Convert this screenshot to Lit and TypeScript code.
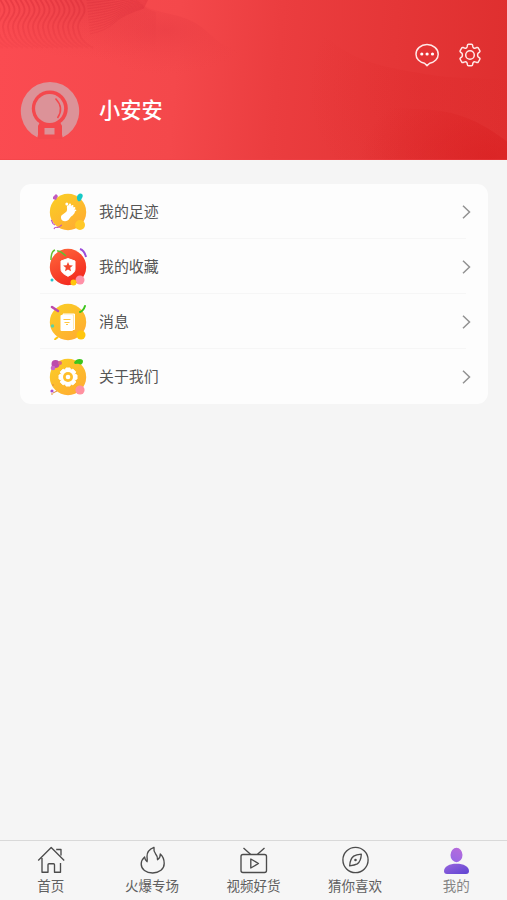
import { LitElement, html, svg, css } from "lit";
import { customElement, property } from "lit/decorators.js";
import { classMap } from "lit/directives/class-map.js";

const waveLines = Array.from({ length: 20 }, (_, i) => {
  const x = -14 + i * 5;
  return `M${x - 3} -4 C${x + 1} 3 ${x + 5} 7 ${x + 3} 13 S${x - 4} 21 ${x - 3} 28 S${x} 42 ${x + 12} 48`;
});
const fanLines = Array.from({ length: 14 }, (_, i) => {
  const d = i * 2.8;
  return `M${90 - d * 0.1} ${34 - d} Q${106 + d * 0.2} ${31 - d} ${114 + d * 0.3} ${23 - d * 0.8} T${144 + d * 0.2} ${8 - d * 0.4}`;
});

const art = {
  footprint: svg`
    <circle cx="19" cy="19" r="18.2" fill="url(#yellow)"/>
    <path d="M4 4l3-3 2 2-2 4-3-1z" fill="#c05cc0"/>
    <path d="M29 8c-2-3-1-7 2.500-7.500 3 .5 2.500 3 1.500 4.500s-1 4-4 3z" fill="#16c9c6"/>
    <path d="M2 27c2 1 0 4 4 5M5 36c1-3 3-1 5-2s2-2 3-2" fill="none" stroke="#bd54c8" stroke-width="1.2"/>
    <circle cx="31" cy="32" r="5" fill="#ffc928"/>
    <path d="M18.500 12.500c3-2 8 2 7.500 6-.5 3.500-4 4.500-5.500 7-2 4-8 3.500-8.500-.5-.5-3.500 3.500-4 5.500-6.500 1.500-2.500-.5-4.500 1-6z" fill="#fff"/>
    <g fill="#fff"><circle cx="17.800" cy="11" r="1.500"/><circle cx="21" cy="11.700" r="1.100"/><circle cx="23.500" cy="13" r="1"/><circle cx="25.400" cy="15" r="1"/><circle cx="26.400" cy="17.300" r=".9"/></g>`,
  favorite: svg`
    <circle cx="19" cy="19" r="18.2" fill="url(#red)"/>
    <path d="M2 12c0-5 1-9 4-10M8 3c4-1 6 3 9 5" fill="none" stroke="#65bd2e" stroke-width="1.500"/>
    <path d="M31 1c3 1 5 4 6 8" fill="none" stroke="#9c4cda" stroke-width="2"/>
    <circle cx="3" cy="32" r="1.500" fill="#21c3c9"/>
    <circle cx="31" cy="32" r="4.500" fill="#ff91a8"/><circle cx="24.500" cy="34.500" r="3" fill="#ffc60c"/>
    <path d="M19 10.500l7 2.500v8.300c0 3.500-4 5.500-7 7-3-1.500-7-3.500-7-7V13z" fill="#fff" stroke="#fff" stroke-linejoin="round"/>
    <path d="M19 14l1.400 3.200 3.500.3-2.700 2.300.8 3.400-3-1.800-3 1.800.8-3.400-2.700-2.300 3.500-.3z" fill="#f4472e"/>`,
  message: svg`
    <circle cx="19" cy="19" r="18.200" fill="url(#yellow)"/>
    <path d="M3 4l6 4" stroke="#bc4bab" stroke-width="2.600" stroke-linecap="round"/>
    <path d="M31 9c3-1 4-3 5-6" fill="none" stroke="#3bc51d" stroke-width="2" stroke-linecap="round"/>
    <circle cx="3.500" cy="23" r="1.700" fill="#5bd1a4"/>
    <circle cx="32" cy="32" r="4.500" fill="#ffc60e"/><path d="M6 37c0-2 2-2 3-3" fill="none" stroke="#ffc60e" stroke-width="2"/>
    <path d="M14 11h11.500v15.500H14z" fill="#ffe9b5" stroke="#fff"/>
    <rect x="11.500" y="12" width="12.500" height="16" rx="1" fill="#fff"/>
    <path d="M14.500 16.500h7M15.500 19.500h5M17 21.500h2" stroke="#ffc641" stroke-width="1.100"/>`,
  about: svg`
    <circle cx="19" cy="19" r="18.200" fill="url(#yellow)"/>
    <circle cx="6.500" cy="6" r="4" fill="#bc4bab"/><circle cx="4" cy="10" r="2.300" fill="#c867c8"/><circle cx="11" cy="5" r="2" fill="#d96986"/>
    <path d="M25 5c1-5 9-5 9-2s-2 4-4 3-3 1-5-1z" fill="#3bc51d"/>
    <circle cx="31" cy="32" r="4.600" fill="#ff91a0"/>
    <circle cx="3" cy="33" r="1.600" fill="#a64bd0"/><path d="M4 35l4-2M3 37v-2M4 28v-2" stroke="#e08b38" stroke-width="1"/>
    <path d="M17 10h4l.6 2.300 2.300-1.200 2.800 2.800-1.200 2.300 2.500.8v4l-2.500.8 1.200 2.300-2.800 2.800-2.300-1.200L21 28h-4l-.6-2.300-2.300 1.200-2.800-2.800 1.200-2.300L10 21v-4l2.500-.8-1.200-2.300 2.800-2.800 2.300 1.200z" fill="#fff" stroke="#fff" stroke-linejoin="round"/>
    <circle cx="19" cy="19" r="5" fill="#ffbf2b"/><circle cx="19" cy="19" r="2.300" fill="#fff"/>`,
};

const tabArt = {
  home: svg`<path d="M2.200 14.500L15.200 1.500l13 13M6 12v14.200h6v-7.500q0-1 1-1h4.500q1 0 1 1v7.500h6V17M20.200 3.500H25v6"/>`,
  fire: svg`<path d="M16 1.300c-4.800 1.900-7.200 5.200-7 9.200.1 2 .5 3.500.1 5.200C7.500 14.500 6.800 13 6.600 11 4.400 13 3.200 15.300 3.200 18c0 5.300 4.800 9 11.500 9s11.500-3.900 11.500-9.500c0-4-1-7-3.900-9.500.2 2.300-.9 4.300-2.800 5.700.3-2.500-.5-4.300-2-6-1.400-1.900-1.900-3.900-1.500-6.400z"/>`,
  video: svg`<rect x="2" y="8.500" width="25.500" height="18" rx="2"/><path d="M4.500 2l7 6.300M25.500 2l-7 6.300M11.800 13v9l7.700-4.500z"/>`,
  compass: svg`<circle cx="15.500" cy="14" r="12.600"/><path d="M21.300 8.200q-.3 7-4 9.700-2.500 1.300-7.600 1.900.3-7 4-9.700 2.500-1.300 7.600-1.900z"/><circle cx="15.500" cy="14" r=".6" fill="currentColor"/>`,
  person: svg`<ellipse cx="14.500" cy="9" rx="6" ry="7.200" fill="url(#head)" stroke="none"/><path d="M2 25c0-4.600 5.500-7.300 12.500-7.300S27 20.400 27 25q0 3-3 3H5q-3 0-3-3z" fill="url(#body)" stroke="none"/>`,
};

@customElement("menu-row")
class MenuRow extends LitElement {
  @property() label = "";
  @property() icon: keyof typeof art = "footprint";

  static styles = css`
    :host { display: flex; align-items: center; height: 55px; padding: 0 16px 0 29px; box-sizing: border-box; }
    .art { width: 38px; height: 38px; flex: none; }
    .label { flex: 1; margin-left: 12px; padding-bottom: 2px; font-size: 14.900px; line-height: 22px; color: #555; }
    .arrow { width: 12px; height: 16px; }
  `;

  render() {
    return html`
      <svg class="art" viewBox="0 0 38 38">
        <defs>
          <linearGradient id="yellow" x2=".7" y2="1"><stop stop-color="#fad024"/><stop offset="1" stop-color="#ffad32"/></linearGradient>
          <linearGradient id="red" x2=".5" y2="1"><stop stop-color="#ff6a3c"/><stop offset="1" stop-color="#f42b20"/></linearGradient>
        </defs>
        ${art[this.icon]}
      </svg>
      <span class="label">${this.label}</span>
      <svg class="arrow" viewBox="0 0 12 16" fill="none" stroke="#929292" stroke-width="1.500"><path d="M3 1.800L9.500 8 3 14.200"/></svg>
    `;
  }
}

@customElement("tab-item")
class TabItem extends LitElement {
  @property() label = "";
  @property() icon: keyof typeof tabArt = "home";
  @property({ type: Boolean }) active = false;

  static styles = css`
    :host { flex: 1; }
    .tab { display: flex; flex-direction: column; align-items: center; padding-top: 5px; color: #4c4c4c; }
    .icon { width: 29px; height: 29px; }
    .label { font-size: 13.500px; line-height: 20px; color: #606060; white-space: nowrap; }
    .active .label { color: #858585; }
  `;

  render() {
    return html`
      <div class=${classMap({ tab: true, active: this.active })}>
        <svg class="icon" viewBox="0 0 29 29" fill="none" stroke="currentColor" stroke-width="1.350" stroke-linejoin="round">
          <defs>
            <linearGradient id="head" x1=".7" x2=".3" y2="1"><stop stop-color="#b66bdb"/><stop offset="1" stop-color="#9868e6"/></linearGradient>
            <linearGradient id="body" x2="1" y2="1"><stop stop-color="#9a66dd"/><stop offset="1" stop-color="#5d43d2"/></linearGradient>
          </defs>
          ${tabArt[this.icon]}
        </svg>
        <span class="label">${this.label}</span>
      </div>
    `;
  }
}

@customElement("app-root")
class AppRoot extends LitElement {
  static styles = css`
    :host {
      display: flex; flex-direction: column; height: 900px; background: #f5f5f5;
      font-family: "Noto Sans CJK SC", sans-serif;
    }
    .header { position: relative; height: 159.500px; flex: none; display: flex; flex-direction: column; overflow: hidden; background: #f04146; }
    .backdrop { position: absolute; inset: 0; width: 100%; height: 100%; }
    .actions { position: relative; display: flex; justify-content: flex-end; gap: 17px; padding: 42px 24px 0 0; }
    .action { width: 26px; height: 26px; }
    .profile { position: relative; display: flex; align-items: center; gap: 19px; margin-top: 13px; padding-left: 20px; }
    .avatar { width: 60px; height: 60px; }
    .name { font-size: 21.200px; font-weight: 500; line-height: 30px; padding-bottom: 4px; color: #fff; }
    .card { margin: 24.500px 19px 0 20px; border-radius: 11px; background: #fdfdfd; height: 220px; }
    .line { height: 1px; margin: -1px 22px 0 20px; background: #f6f6f6; }
    .space { flex: 1; }
    .tabs { display: flex; height: 60px; box-sizing: border-box; border-top: 1px solid #d9d9d9; background: #f6f6f6; }
  `;

  render() {
    return html`
      <div class="header">
        <svg class="backdrop" viewBox="0 0 507 160" preserveAspectRatio="none">
          <defs>
            <linearGradient id="base" x2="507" y1="30" y2="70" gradientUnits="userSpaceOnUse">
              <stop stop-color="#fb4b51"/><stop offset=".35" stop-color="#f4484b"/><stop offset=".55" stop-color="#eb3d3f"/><stop offset="1" stop-color="#df2f2f"/>
            </linearGradient>
            <linearGradient id="fade" x1=".1" x2="0" y2="1"><stop stop-color="#fff"/><stop offset=".5" stop-color="#fff" stop-opacity=".55"/><stop offset="1" stop-color="#fff" stop-opacity="0"/></linearGradient>
            <mask id="dissolve"><rect width="160" height="56" fill="url(#fade)"/></mask>
            <radialGradient id="shade" cx="95" cy="0" r="120" gradientTransform="scale(1 .5)" gradientUnits="userSpaceOnUse"><stop stop-color="#d8303c" stop-opacity=".42"/><stop offset="1" stop-color="#e93d42" stop-opacity="0"/></radialGradient>
            <radialGradient id="hill" cx="165" cy="30" r="90" gradientTransform="translate(0 15) scale(1 .5)" gradientUnits="userSpaceOnUse"><stop stop-color="#d92f3b" stop-opacity=".28"/><stop offset="1" stop-color="#e93d42" stop-opacity="0"/></radialGradient>
            <radialGradient id="slope" cx="420" cy="90" r="115" gradientUnits="userSpaceOnUse"><stop stop-color="#d91e20" stop-opacity=".16"/><stop offset="1" stop-color="#d91e20" stop-opacity="0"/></radialGradient>
            <radialGradient id="corner" cx="490" cy="158" r="130" gradientTransform="translate(0 60) scale(1 .62)" gradientUnits="userSpaceOnUse"><stop stop-color="#d91e20" stop-opacity=".6"/><stop offset="1" stop-color="#d91e20" stop-opacity="0"/></radialGradient>
          </defs>
          <rect width="507" height="160" fill="url(#base)"/>
          <path d="M0 0h138c5 7 11 10 18 12v50H0z" fill="url(#shade)"/>
          <path d="M60 0h78c14 16 40 10 62 26 14 10 18 20 40 25v30H60z" fill="url(#hill)"/>
          <path d="M300 0c30 60 76 66 130 75 28 5 54 2 77 6v79H300z" fill="url(#slope)"/>
          <path d="M300 60c50 45 76 48 130 50 30 2 54 14 77 32v18H300z" fill="url(#corner)"/>
          <g mask="url(#dissolve)" fill="none" stroke="#d92e3a" stroke-opacity=".5">
            ${waveLines.map((d) => svg`<path d=${d} stroke-width="1.800"/>`)}
            ${fanLines.map((d) => svg`<path d=${d} stroke-width=".9" stroke-opacity=".4"/>`)}
          </g>
        </svg>
        <div class="actions">
          <svg class="action" viewBox="0 0 26 26" fill="none" stroke="#ffe9e8" stroke-width="1.500" stroke-linejoin="round">
            <path d="M10.500 21.200C5.500 20.300 2 16.700 2 12.200 2 6.800 6.800 2.600 13 2.600s11.200 4.200 11.200 9.600c0 4.500-3.500 8.100-8.500 9L13 23.600z"/>
            <g fill="#fff" stroke="none"><circle cx="7.800" cy="12" r="1.600"/><circle cx="13.100" cy="12" r="1.600"/><circle cx="18.500" cy="12" r="1.600"/></g>
          </svg>
          <svg class="action" viewBox="0 0 26 26" fill="none" stroke="#ffe9e8" stroke-width="1.500" stroke-linejoin="round">
            <path d="M11.500 2.300h3q1 0 1.100 1l.3 1.600q.2.700.9 1.100.8.400 1.500.1l1.500-.6q1-.3 1.500.5l1.500 2.600q.5.900-.3 1.500l-1.300 1q-.6.500-.6 1.900t.6 1.900l1.300 1q.8.600.3 1.500l-1.500 2.600q-.5.800-1.500.5l-1.500-.6q-.7-.3-1.500.1-.7.400-.9 1.100l-.3 1.600q-.1 1-1.100 1h-3q-1 0-1.100-1l-.3-1.600q-.2-.7-.9-1.100-.8-.4-1.500-.1l-1.500.6q-1 .3-1.500-.5l-1.500-2.600q-.5-.9.3-1.500l1.300-1q.6-.5.600-1.900t-.6-1.900l-1.300-1q-.8-.6-.3-1.500l1.500-2.600q.5-.8 1.500-.5l1.500.6q.7.300 1.500-.1.700-.4.900-1.100l.3-1.600q.1-1 1.100-1z"/>
            <circle cx="13" cy="13" r="4.300"/>
          </svg>
        </div>
        <div class="profile">
          <svg class="avatar" viewBox="0 0 60 60">
            <path d="M17.500 56.500A29.200 29.200 0 1 1 42.500 56.500L41.500 51V44.500H18.500V51z" fill="#dc9298"/>
            <circle cx="29.800" cy="27.500" r="18" fill="#f4484d"/>
            <path d="M20 41h20l2 4v9l.5 4h-25l.5-4v-9z" fill="#f4484d"/>
            <circle cx="29.600" cy="27.500" r="14.500" fill="#dc9298"/>
            <path d="M35.500 17.500q9 9.500 2 19.500" fill="none" stroke="#f4484d" stroke-width="1.500"/>
            <rect x="24.500" y="47" width="10" height="6.500" fill="#dc9298"/>
          </svg>
          <span class="name">小安安</span>
        </div>
      </div>
      <div class="card">
        <menu-row label="我的足迹" icon="footprint"></menu-row>
        <div class="line"></div>
        <menu-row label="我的收藏" icon="favorite"></menu-row>
        <div class="line"></div>
        <menu-row label="消息" icon="message"></menu-row>
        <div class="line"></div>
        <menu-row label="关于我们" icon="about"></menu-row>
      </div>
      <div class="space"></div>
      <div class="tabs">
        <tab-item label="首页" icon="home"></tab-item>
        <tab-item label="火爆专场" icon="fire"></tab-item>
        <tab-item label="视频好货" icon="video"></tab-item>
        <tab-item label="猜你喜欢" icon="compass"></tab-item>
        <tab-item label="我的" icon="person" active></tab-item>
      </div>
    `;
  }
}
